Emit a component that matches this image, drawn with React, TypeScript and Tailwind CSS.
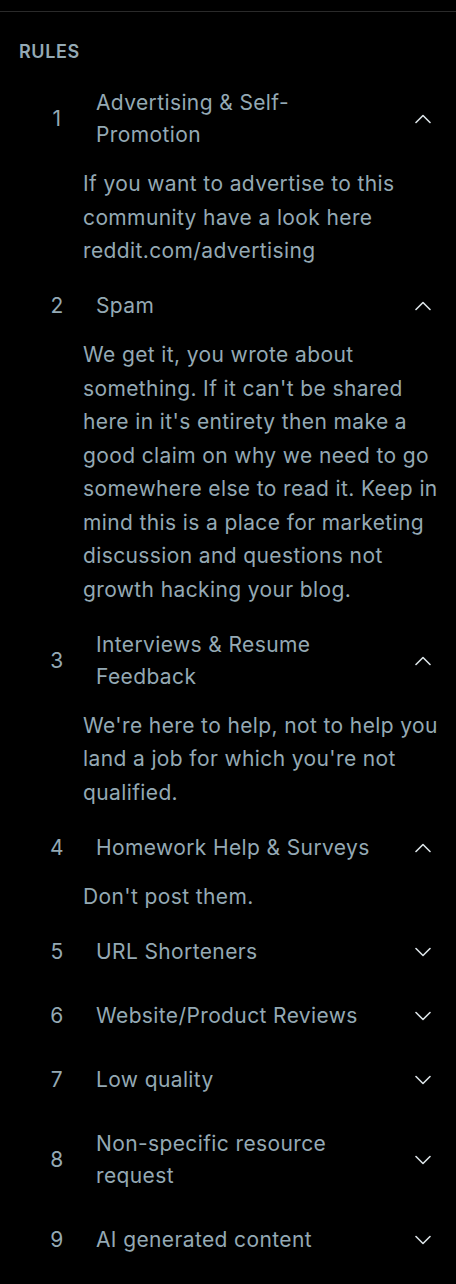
import { useState } from 'react';

interface Rule {
  title: string;
  body: string;
}

const RULES: Rule[] = [
  {
    title: 'Advertising & Self-Promotion',
    body: 'If you want to advertise to this community have a look here reddit.com/advertising',
  },
  {
    title: 'Spam',
    body: "We get it, you wrote about something. If it can't be shared here in it's entirety then make a good claim on why we need to go somewhere else to read it. Keep in mind this is a place for marketing discussion and questions not growth hacking your blog.",
  },
  {
    title: 'Interviews & Resume Feedback',
    body: "We're here to help, not to help you land a job for which you're not qualified.",
  },
  { title: 'Homework Help & Surveys', body: "Don't post them." },
  { title: 'URL Shorteners', body: '' },
  { title: 'Website/Product Reviews', body: '' },
  { title: 'Low quality', body: '' },
  { title: 'Non-specific resource request', body: '' },
  { title: 'AI generated content', body: '' },
];

function Chevron({ up }: { up: boolean }) {
  return (
    <svg width="16" height="10" viewBox="0 0 16 10" fill="none" className="text-[#dbe3e7]">
      <polyline
        points={up ? '1,8.5 8,1.5 15,8.5' : '1,1.5 8,8.5 15,1.5'}
        stroke="currentColor"
        strokeWidth={1.6}
        strokeLinecap="round"
        strokeLinejoin="round"
      />
    </svg>
  );
}

export default function App() {
  const [open, setOpen] = useState<number[]>([0, 1, 2, 3]);

  const toggle = (i: number) =>
    setOpen(prev => (prev.includes(i) ? prev.filter(x => x !== i) : [...prev, i]));

  return (
    <div
      className="min-h-[1284px] w-[456px] bg-black pt-[11px] text-[#94a9b4]"
      style={{ fontFamily: 'Inter, "Noto Sans", sans-serif' }}
    >
      <div className="border-t border-[#2a2a2a]">
        <h2 className="pl-[19px] pt-[28px] text-[18px] font-semibold uppercase leading-[24px] tracking-[0.6px]">
          Rules
        </h2>
        <ol className="mt-[7px] tracking-[0.38px]">
          {RULES.map((rule, i) => {
            const isOpen = open.includes(i);
            return (
              <li key={rule.title}>
                <button
                  onClick={() => toggle(i)}
                  className="flex w-full items-center py-[16px] pl-[45px] pr-[25px] text-left"
                >
                  <span className="w-[24px] shrink-0 text-center text-[21px] leading-[32px]">{i + 1}</span>
                  <span className="ml-[27px] flex-1 text-[21px] leading-[32px]">{rule.title}</span>
                  <span className="ml-[32px] flex w-[16px] shrink-0 justify-center">
                    <Chevron up={isOpen} />
                  </span>
                </button>
                {isOpen && rule.body && (
                  <p className="pb-[6.5px] pl-[83px] pr-[14px] text-[21px] leading-[33.5px]">{rule.body}</p>
                )}
              </li>
            );
          })}
        </ol>
      </div>
    </div>
  );
}
